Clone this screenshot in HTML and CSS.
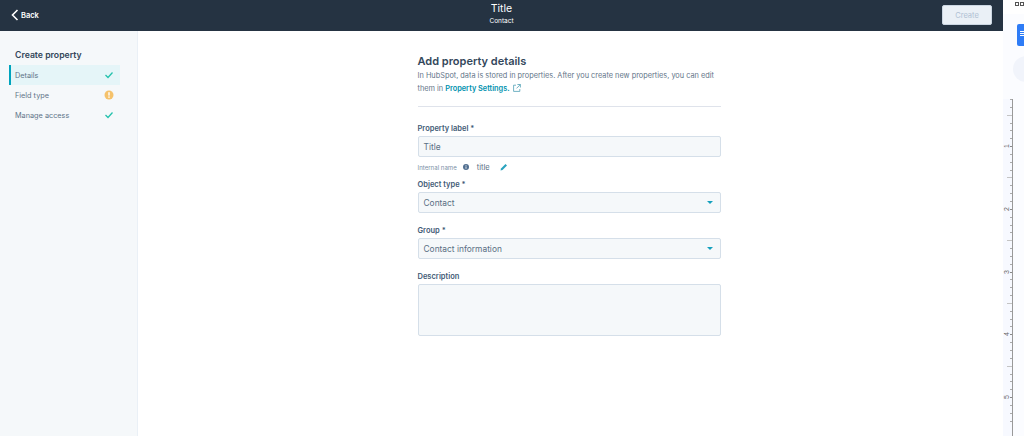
FILE: index.html
```html
<!DOCTYPE html>
<html lang="en">
<head>
<meta charset="utf-8">
<title>Create property</title>
<link rel="stylesheet" href="styles.css">
</head>
<body>
<div class="screen">
  <div class="app">
    <header class="topbar">
      <a class="back"><svg class="back-icon" width="8" height="12" viewBox="0 0 8 12"><path d="M6.5 1 1.5 6l5 5" fill="none" stroke="#fff" stroke-width="1.6"/></svg>Back</a>
      <div class="heading"><div class="heading-title">Title</div><div class="heading-sub">Contact</div></div>
      <button class="create">Create</button>
    </header>
    <div class="body">
      <aside class="sidebar">
        <h2 class="side-title">Create property</h2>
        <ul class="steps">
          <li class="step active"><span>Details</span><svg width="10" height="8" viewBox="0 0 10 8"><path d="M1.5 4l2.5 2.5L8.5 1.5" fill="none" stroke="#25c2ad" stroke-width="1.3"/></svg></li>
          <li class="step"><span>Field type</span><svg width="10" height="10" viewBox="0 0 10 10"><circle cx="5" cy="5" r="4.5" fill="#f5c26b"/><rect x="4.3" y="2.2" width="1.4" height="3.4" fill="#fff"/><rect x="4.3" y="6.4" width="1.4" height="1.4" fill="#fff"/></svg></li>
          <li class="step"><span>Manage access</span><svg width="10" height="8" viewBox="0 0 10 8"><path d="M1.5 4l2.5 2.5L8.5 1.5" fill="none" stroke="#25c2ad" stroke-width="1.3"/></svg></li>
        </ul>
      </aside>
      <main class="main">
        <form class="form">
          <h1 class="form-title">Add property details</h1>
          <p class="intro">In HubSpot, data is stored in properties. After you create new properties, you can edit<br>them in <a class="link">Property Settings.</a> <svg class="ext" width="8" height="8" viewBox="0 0 8 8"><path d="M3 1.2H.6v6.2h6.2V5M4.4.5h3v3M7.3.6 3.5 4.4" fill="none" stroke="#4f9fb5" stroke-width=".8"/></svg></p>
          <hr class="rule">
          <label class="label">Property label *</label>
          <div class="input">Title</div>
          <div class="internal"><span class="internal-key">Internal name</span><svg class="info" width="6" height="6" viewBox="0 0 6 6"><circle cx="3" cy="3" r="3" fill="#516f90"/><rect x="2.6" y="1" width=".8" height=".8" fill="#fff"/><rect x="2.6" y="2.4" width=".8" height="2.4" fill="#fff"/></svg><span class="internal-val">title</span><svg class="pencil" width="8" height="8" viewBox="0 0 8 8"><path d="M0.5 7.5l.5-2L5.5 1l1.5 1.5L2.5 7z" fill="#2aa3bf"/></svg></div>
          <label class="label">Object type *</label>
          <div class="input select"><span>Contact</span><i class="caret"></i></div>
          <label class="label group">Group *</label>
          <div class="input select"><span>Contact information</span><i class="caret"></i></div>
          <label class="label group">Description</label>
          <div class="input area"></div>
        </form>
      </main>
    </div>
  </div>
  <aside class="tools">
    <div class="toolbar"><i class="mini"></i><i class="mini"></i></div>
    <div class="tools-top">
      <div class="doc-btn"><i></i><i></i><i></i></div>
      <div class="round"></div>
    </div>
    <div class="ruler" id="ruler"></div>
  </aside>
</div>
<script src="ruler.js"></script>
</body>
</html>
```
FILE: ruler.js
```js
var ruler = document.getElementById('ruler');
for (var i = 2; i < 44; i++) {
  var t = document.createElement('div');
  var n = i % 8;
  t.className = 'tick' + (n === 0 ? ' major' : n === 4 ? ' mid' : '');
  if (n === 0) {
    var s = document.createElement('span');
    s.className = 'num';
    s.textContent = i / 8;
    t.appendChild(s);
  }
  ruler.appendChild(t);
}
```
FILE: styles.css
```css
* { box-sizing: border-box; }
html, body { margin: 0; padding: 0; height: 100%; overflow: hidden; }
body { font-family: "Inter", "Liberation Sans", sans-serif; color: #33475b; background: #fff; }
.screen { display: flex; width: 1024px; height: 436px; }
.app { width: 1003px; display: flex; flex-direction: column; }
.topbar { height: 31px; background: #253342; display: flex; align-items: center; justify-content: space-between; padding: 0 11px 1px 11px; position: relative; flex: none; }
.back { display: flex; align-items: center; gap: 2px; color: #fff; font-size: 7.5px; font-weight: 600; }
.heading { position: absolute; left: 0; right: 0; top: 0; text-align: center; color: #fff; }
.heading-title { font-size: 10.5px; line-height: 14px; margin-top: 2px; }
.heading-sub { font-size: 6.5px; line-height: 9px; margin-top: 1px; }
.create { width: 50px; height: 20px; background: #eaf0f6; border: 1px solid #cbd6e2; border-radius: 2px; color: #b0c1d4; font: 400 7.5px "Inter", sans-serif; padding: 0; }
.body { flex: 1; display: flex; min-height: 0; }
.sidebar { width: 138px; background: #f5f8fa; border-right: 1px solid #eaf0f6; padding: 18px 17px 0 9px; flex: none; }
.side-title { margin: 0 0 4px 6px; font-size: 8.7px; line-height: 12px; font-weight: 600; color: #33475b; }
.steps { list-style: none; margin: 0; padding: 0; }
.step { height: 20px; display: flex; align-items: center; justify-content: space-between; padding: 0 6px; font-size: 7.3px; color: #5f7488; }
.step.active { background: #e5f5f8; box-shadow: inset 2px 0 0 #00a4bd; }
.main { flex: 1; display: flex; justify-content: center; padding-top: 23px; padding-right: 3px; }
.form { width: 303px; }
.form-title { margin: 0 0 -1px; font-size: 11px; line-height: 15px; font-weight: 600; color: #33475b; }
.intro { margin: 1px 0 0; font-size: 7.35px; line-height: 13px; color: #5f7488; white-space: nowrap; }
.link { color: #0091ae; font-weight: 600; }
.ext { vertical-align: -1px; margin-left: 1px; }
.rule { margin: 11px 0 16px; border: 0; border-top: 1px solid #dfe3eb; }
.label { display: block; font-size: 7.5px; line-height: 11px; font-weight: 600; color: #425b76; margin-bottom: 2px; }
.label.group { margin-top: 12px; }
.input { height: 21px; background: #f5f8fa; border: 1px solid #d5dfe9; border-radius: 2px; font-size: 8.4px; color: #5a6f84; padding: 0 5px; display: flex; align-items: center; justify-content: space-between; }
.select { padding-right: 7px; }
.caret { width: 0; height: 0; border: 3.5px solid transparent; border-top-color: #14a0bd; border-bottom: 0; }
.area { height: 52px; }
.internal { display: flex; align-items: center; height: 20px; margin-bottom: 2px; font-size: 6.1px; color: #7c8fa6; }
.info { margin-left: 6px; }
.internal-val { font-size: 7.5px; color: #5a6f84; margin-left: 8px; }
.pencil { margin-left: 10px; }
.tools { width: 21px; background: #fbfcff; display: flex; flex-direction: column; overflow: hidden; }
.toolbar { height: 14px; background: #fff; display: flex; gap: 1px; padding: 2px 0 0 12px; }
.mini { width: 4px; height: 4px; border: 1px solid #555; }
.tools-top { height: 85px; padding: 10px 0 0 14px; }
.doc-btn { width: 10px; height: 22px; background: #2e7cf6; border-radius: 2px 0 0 2px; padding: 7px 0 0 3px; display: flex; flex-direction: column; gap: 1px; }
.doc-btn i { display: block; height: 1px; background: #fff; }
.round { width: 20px; height: 26px; background: #f1f4fb; border-radius: 13px 0 0 13px; margin: 10px 0 0 -4px; }
.ruler { flex: 1; width: 10px; background: #f7f9ff; border-right: 1px solid #999; display: flex; flex-direction: column; align-items: flex-end; }
.tick { height: 7.85px; flex: none; border-top: 1px solid #aaa; width: 2px; position: relative; }
.tick.mid { width: 5px; border-top-color: #c4c4c4; }
.tick.major { width: 2px; border-top-color: #888; }
.num { position: absolute; left: -5px; top: -6px; font: 7px/10px "Liberation Sans", sans-serif; color: #666; transform: rotate(-90deg); }
```
